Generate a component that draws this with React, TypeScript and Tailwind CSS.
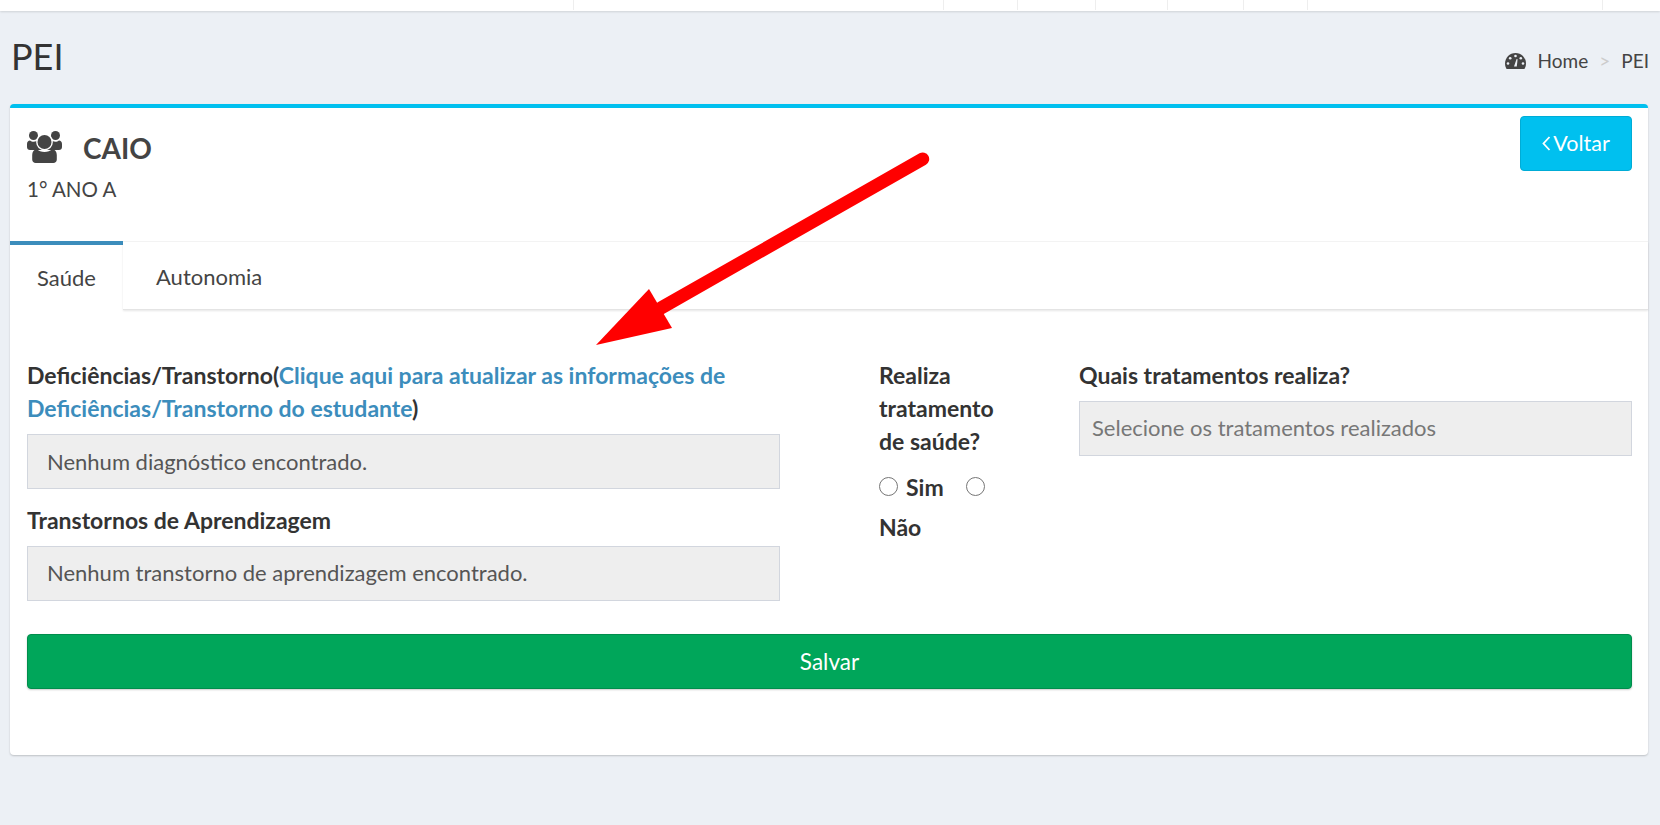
const font = "font-['Lato','Liberation_Sans',sans-serif]";

function UsersIcon() {
  return (
    <svg width="35" height="32" viewBox="0 0 35 32" className="shrink-0" fill="#444">
      <circle cx="6.5" cy="4.5" r="4.5" />
      <circle cx="28.5" cy="4.5" r="4.5" />
      <path d="M0 13c0-2.2 1.4-3.6 3-3.6 1 .9 2.3 1.4 3.6 1.4 1 0 2-.3 2.9-.8h6V19H3c-1.8 0-3-1.2-3-3z" />
      <path d="M35 13c0-2.2-1.4-3.6-3-3.6-1 .9-2.3 1.4-3.6 1.4-1 0-2-.3-2.9-.8h-6V19H32c1.8 0 3-1.2 3-3z" />
      <circle cx="17.5" cy="11" r="8.4" fill="#fff" />
      <path d="M3.8 21.5h27.4V32H3.8z" fill="#fff" />
      <circle cx="17.5" cy="11" r="7" />
      <path d="M5.2 24c0-3.3 1.7-5.4 4.4-6 2 1.900 4.800 3 7.900 3s5.900-1.100 7.900-3c2.700.6 4.400 2.700 4.400 6v4.500c0 2-1.500 3.500-3.500 3.500H8.700c-2 0-3.500-1.500-3.500-3.500z" />
    </svg>
  );
}

function GaugeIcon() {
  return (
    <svg width="21" height="16" viewBox="0 0 21 16" className="shrink-0">
      <path d="M10.500 0C4.700 0 0 4.700 0 10.500c0 2 .6 3.900 1.600 5.500h17.800c1-1.600 1.600-3.500 1.600-5.500C21 4.700 16.300 0 10.500 0z" fill="#444" />
      <circle cx="10.500" cy="3" r="1.300" fill="#ecf0f5" />
      <circle cx="5.200" cy="5.300" r="1.300" fill="#ecf0f5" />
      <circle cx="15.800" cy="5.300" r="1.300" fill="#ecf0f5" />
      <circle cx="3" cy="10.500" r="1.300" fill="#ecf0f5" />
      <circle cx="18" cy="10.500" r="1.300" fill="#ecf0f5" />
      <path d="M9 13.500 11.600 6 12.600 6.300 11.800 13.500z" fill="#ecf0f5" />
    </svg>
  );
}

function Arrow() {
  return (
    <svg
      className="absolute left-[590px] top-[150px] pointer-events-none"
      width="345"
      height="200"
      viewBox="590 150 345 200"
    >
      <line x1="922.700" y1="159" x2="661" y2="308" stroke="#ff0000" strokeWidth="13" strokeLinecap="round" />
      <polygon points="649,289 596,345 672,328" fill="#ff0000" />
    </svg>
  );
}

const dividers = ["w-[574px]", "w-[370px]", "w-[74px]", "w-[78px]", "w-[72px]", "w-[76px]", "w-[64px]", "w-[295px]"];

function Radio() {
  return <span className="inline-block size-[19px] rounded-full border-[1.5px] border-[#767676] bg-white shrink-0" />;
}

export default function App() {
  return (
    <div className={`${font} relative h-[825px] overflow-hidden bg-[#ecf0f5] text-[#333] text-[22px]`}>
      <header className="flex h-[11px] bg-white shadow-[0_1px_2px_rgba(0,0,0,0.12)]">
        {dividers.map((w) => (
          <div key={w} className={`${w} border-r border-[#eeeeee] h-[10px]`} />
        ))}
      </header>

      <section className="flex items-start justify-between pl-[11px] pr-[11px] h-[93px]">
        <h1 className="text-[36px] leading-[40px] font-normal mt-[25px] text-[#333]">PEI</h1>
        <nav className="flex items-center mt-[38px] text-[19px] leading-[24px] text-[#444]">
          <GaugeIcon />
          <span className="ml-[12px]">Home</span>
          <span className="mx-[11px] text-[#ccc]">&gt;</span>
          <span>PEI</span>
        </nav>
      </section>

      <main className="mx-[10px] mr-[12px] h-[651px] rounded-[4px] border-t-4 border-[#00c0ef] bg-white shadow-[0_1px_2px_rgba(0,0,0,0.2)]">
        <div className="flex h-[133px] items-start justify-between pl-[17px] pr-[16px] pt-[8px]">
          <div>
            <div className="flex items-center gap-[21px] mt-[15px] h-[32px]">
              <UsersIcon />
              <span className="text-[28px] leading-[32px] font-bold text-[#444] pt-[2px]">CAIO</span>
            </div>
            <p className="mt-[14px] text-[20.5px] leading-[24px] text-[#444]">1° ANO A</p>
          </div>
          <button className="flex h-[55px] w-[112px] items-center justify-center rounded-[4px] border border-[#00acd6] bg-[#00c0ef] text-[21.5px] text-white">
            <svg width="9" height="15" viewBox="0 0 9 15" className="mr-[2px]" fill="none" stroke="white" strokeWidth="1.800">
              <path d="M7.500 1 1.500 7.500 7.500 14" />
            </svg>
            Voltar
          </button>
        </div>

        <div className="flex h-[69px] border-t border-[#f4f4f4]">
          <div className="flex w-[113px] items-center justify-center border-t-4 border-[#3c8dbc] -mt-px text-[#444] pb-[1px]">
            Saúde
          </div>
          <div className="flex flex-1 items-center border-b border-[#e4e4e4] pl-[33px] pt-[1px] text-[#444] shadow-[0_1px_2px_rgba(0,0,0,0.1)]">
            Autonomia
          </div>
        </div>

        <form className="pl-[17px] pr-[16px] pt-[49px]">
          <div className="flex items-start">
            <div className="w-[753px]">
              <label className="block text-[23px] font-bold leading-[33px] text-[#333]">
                Deficiências/Transtorno(<a className="text-[#3c8dbc]">Clique aqui para atualizar as informações de Deficiências/Transtorno do estudante</a>)
              </label>
              <div className="mt-[9px] flex h-[55px] items-center border border-[#d2d6de] bg-[#eeeeee] pl-[19px] pb-[1px] text-[#555]">
                Nenhum diagnóstico encontrado.
              </div>
              <label className="mt-[15px] block text-[23px] font-bold leading-[33px] text-[#333]">Transtornos de Aprendizagem</label>
              <div className="mt-[9px] flex h-[55px] items-center border border-[#d2d6de] bg-[#eeeeee] pl-[19px] pb-[2px] text-[#555]">
                Nenhum transtorno de aprendizagem encontrado.
              </div>
            </div>

            <div className="ml-[99px] w-[120px] text-[23px]">
              <label className="block font-bold leading-[33px] text-[#333]">Realiza tratamento de saúde?</label>
              <div className="mt-[15px] flex h-[26px] items-center font-bold">
                <Radio />
                <span className="ml-[8px] mt-[3px]">Sim</span>
                <span className="ml-[22px] flex"><Radio /></span>
              </div>
              <div className="mt-[15px] font-bold leading-[26px]">Não</div>
            </div>

            <div className="ml-[80px] flex-1">
              <label className="block text-[23px] font-bold leading-[33px] text-[#333]">Quais tratamentos realiza?</label>
              <div className="mt-[9px] flex h-[55px] items-center border border-[#d2d6de] bg-[#eeeeee] pl-[12px] pb-[2px] text-[#777]">
                Selecione os tratamentos realizados
              </div>
            </div>
          </div>

          <button className="mt-[33px] flex h-[55px] w-full items-center justify-center rounded-[4px] border border-[#008d4c] bg-[#00a65a] text-[22.500px] text-white shadow-[0_1px_2px_rgba(0,0,0,0.2)]">
            Salvar
          </button>
        </form>
      </main>

      <Arrow />
    </div>
  );
}
